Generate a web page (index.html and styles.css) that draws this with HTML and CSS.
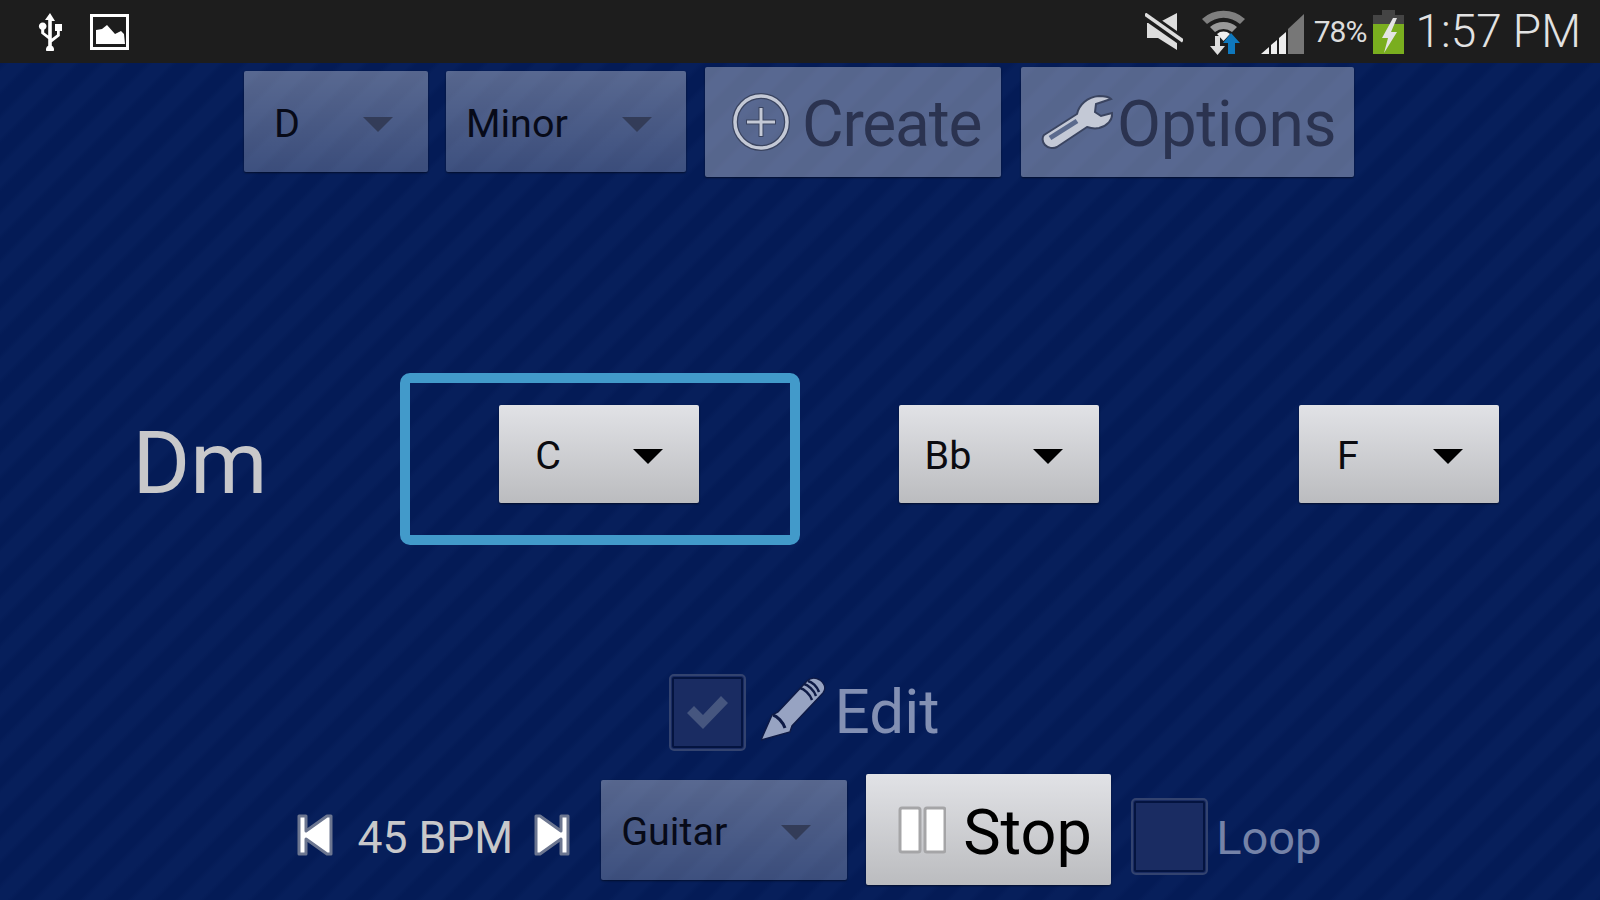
FILE: index.html

```html
<!DOCTYPE html>
<html lang="en">
<head>
  <meta charset="UTF-8">
  <title>Chord Progressions</title>
  <link rel="stylesheet" href="styles.css">
</head>
<body>
  <div class="status-bar">
    <svg class="ic-usb" width="24" height="38" viewBox="0 0 24 38">
      <path d="M12 0l5 8h-3.200v17.500l5.200-4v-3.500h-2v-7h7v7h-2.200v5l-8 6.200v3.600a4 4 0 1 1-3.600 0v-6.800l-7-5.400v-3.800a3.800 3.800 0 1 1 3 0v2.600l4 3.100v-15.500h-3.200z" fill="#fff"/>
    </svg>
    <svg class="ic-pic" width="39" height="36" viewBox="0 0 39 36">
      <rect x="1.500" y="1.500" width="36" height="33" fill="none" stroke="#fff" stroke-width="3"/>
      <path d="M6 30v-14l6-1 5-4 8 9 6-3 3 3 1 10z" fill="#fff"/>
    </svg>
    <div class="status-right">
      <svg class="ic-mute" width="38" height="38" viewBox="0 0 38 38">
        <path d="M2 10h11l19-10v37l-19-12h-11z" fill="#ddd"/>
        <path d="M-1 1l40 28" stroke="#1d1d1d" stroke-width="10"/>
        <path d="M0 1l38 27" stroke="#ddd" stroke-width="3.500"/>
      </svg>
      <svg class="ic-wifi" width="43" height="46" viewBox="0 0 43 46">
        <path d="M0 10a32 32 0 0 1 43 0l-5 5a25 25 0 0 0-33 0z" fill="#7f7f7f"/>
        <path d="M8 18a21 21 0 0 1 27 0l-5 5a14 14 0 0 0-17 0z" fill="#9a9a9a"/>
        <path d="M15 25a10 10 0 0 1 13 0l-6.500 7z" fill="#eee"/>
        <path d="M13 27h5v10h5l-7.500 9-7.500-9h5z" fill="#ddd"/>
        <path d="M29 24l9 10h-5v11h-7v-11h-5z" fill="#0f78bd"/>
      </svg>
      <svg class="ic-signal" width="43" height="40" viewBox="0 0 43 40">
        <path d="M0 40l8-7v7z" fill="#eee"/>
        <path d="M10 31l6-5v14h-6z" fill="#eee"/>
        <path d="M18 24l7-6v22h-7z" fill="#eee"/>
        <path d="M27 15l16-15v40h-16z" fill="#777"/>
      </svg>
      <span class="batt-pct">78%</span>
      <svg class="ic-batt" width="31" height="44" viewBox="0 0 31 44">
        <rect x="9" y="0" width="13" height="5" fill="#444"/>
        <rect x="0" y="5" width="31" height="10" fill="#444"/>
        <rect x="0" y="14" width="31" height="30" fill="#7aae1f"/>
        <path d="M20 8l-11 20h6l-4 15 13-21h-6l6-14z" fill="#e4e4e4"/>
      </svg>
      <span class="clock">1:57 PM</span>
    </div>
  </div>

  <div class="top-row">
    <div class="spinner off key-spin"><span>D</span><i class="arrow"></i></div>
    <div class="spinner off scale-spin"><span>Minor</span><i class="arrow"></i></div>
    <div class="btn off create-btn">
      <svg width="58" height="58" viewBox="0 0 58 58">
        <circle cx="29" cy="29" r="26" fill="none" stroke="#3a4460" stroke-width="6"/>
        <circle cx="29" cy="29" r="26" fill="none" stroke="#c4c9d6" stroke-width="3.500"/>
        <path d="M29 14v30M14 29h30" stroke="#3a4460" stroke-width="5"/>
        <path d="M29 15v28M15 29h28" stroke="#c4c9d6" stroke-width="3"/>
      </svg>
      <span>Create</span>
    </div>
    <div class="btn off options-btn">
      <svg width="72" height="54" viewBox="0 0 72 54">
        <path d="M3 40l33-21c2-9 10-17 22-18 5 0 10 1 12 3l-15 5-1 8 6 4 11-3c1 7-5 13-13 15-5 1-9 0-12-1l-30 20c-4 2-9 1-12-2s-3-8-1-10z" fill="#c4c9d6" stroke="#3a4460" stroke-width="2"/>
        <path d="M9 43l27-17" stroke="#5b6a8d" stroke-width="5"/>
      </svg>
      <span>Options</span>
    </div>
  </div>

  <div class="chord-row">
    <div class="chord-cell chord-name">Dm</div>
    <div class="chord-cell active">
      <div class="spinner small"><span>C</span><i class="arrow"></i></div>
    </div>
    <div class="chord-cell">
      <div class="spinner small"><span>Bb</span><i class="arrow"></i></div>
    </div>
    <div class="chord-cell">
      <div class="spinner small"><span>F</span><i class="arrow"></i></div>
    </div>
  </div>

  <div class="edit-row">
    <div class="check on">
      <svg width="46" height="36" viewBox="0 0 46 36">
        <path d="M3 19l7-7 9 9 18-19 7 7-25 26z" fill="#46567f"/>
      </svg>
    </div>
    <svg class="ic-pencil" width="65" height="65" viewBox="0 0 65 65">
      <path d="M0 64l11-25 6-3 29-31c3-3 8-4 13-1 5 4 6 9 3 13l-31 33-2 6z" fill="#97a3c2" stroke="#0e1a45" stroke-width="1.500"/>
      <path d="M12 39c4 1 10 7 12 13" fill="none" stroke="#0e1a45" stroke-width="3"/>
      <path d="M39 12c4 1 10 6 12 12M43 8c4 1 10 6 12 12M47 5c4 1 9 5 11 11" fill="none" stroke="#0e1a45" stroke-width="2.500"/>
    </svg>
    <span class="edit-label">Edit</span>
  </div>

  <div class="bottom-row">
    <svg class="ic-skip" width="38" height="44" viewBox="0 0 38 44">
      <path d="M3 3h7v15l21-15h4v38h-4l-21-15v15h-7z" fill="#fff" stroke="#6c7690" stroke-width="3" stroke-linejoin="round"/>
    </svg>
    <span class="bpm">45 BPM</span>
    <svg class="ic-skip next" width="38" height="44" viewBox="0 0 38 44">
      <path d="M3 3h7v15l21-15h4v38h-4l-21-15v15h-7z" fill="#fff" stroke="#6c7690" stroke-width="3" stroke-linejoin="round" transform="matrix(-1 0 0 1 38 0)"/>
    </svg>
    <div class="spinner off inst-spin"><span>Guitar</span><i class="arrow"></i></div>
    <div class="btn stop-btn">
      <svg width="48" height="48" viewBox="0 0 48 48">
        <rect x="2" y="2" width="20" height="44" rx="2" fill="#fff" stroke="#a5a5a7" stroke-width="3"/>
        <rect x="27" y="2" width="20" height="44" rx="2" fill="#fff" stroke="#a5a5a7" stroke-width="3"/>
      </svg>
      <span>Stop</span>
    </div>
    <div class="check"></div>
    <span class="loop-label">Loop</span>
  </div>
</body>
</html>
```

FILE: styles.css

```css
html, body {
  margin: 0;
  height: 100%;
}
body {
  width: 1600px;
  height: 900px;
  overflow: hidden;
  font-family: Roboto, "Liberation Sans", sans-serif;
  background-color: #041b56;
  background-image: repeating-linear-gradient(135deg, #041b56 0, #041b56 12px, #071f5b 17px, #071f5b 29px, #041b56 34px);
}

/* status bar */
.status-bar {
  height: 63px;
  background-color: #1d1d1d;
  display: flex;
  align-items: center;
  padding: 0 19px 0 38px;
  box-sizing: border-box;
}
.ic-pic {
  margin-left: 28px;
}
.status-right {
  margin-left: auto;
  display: flex;
  align-items: center;
}
.ic-wifi {
  margin-left: 19px;
}
.ic-signal {
  margin-left: 16px;
  margin-top: 4px;
}
.batt-pct {
  margin-left: 10px;
  font-size: 30px;
  color: #dcdcdc;
  letter-spacing: -1px;
}
.ic-batt {
  margin-left: 7px;
}
.clock {
  margin-left: 11px;
  margin-bottom: 2px;
  font-size: 46px;
  font-weight: 300;
  color: #e2e2e2;
}

/* spinners and buttons */
.spinner {
  display: flex;
  align-items: center;
  justify-content: space-between;
  box-sizing: border-box;
  border-radius: 2px;
  background: linear-gradient(#e1e2e6, #bbbcbf);
  box-shadow: 0 1px 2px rgba(0,0,0,0.5);
  color: #0b0b10;
  font-size: 39.500px;
}
.spinner span {
  padding-top: 3px;
}
.spinner.off {
  background: linear-gradient(rgba(255,255,255,0.33), rgba(255,255,255,0.22));
  color: #070a18;
}
.arrow {
  width: 0;
  height: 0;
  margin-top: 6px;
  border-left: 15px solid transparent;
  border-right: 15px solid transparent;
  border-top: 15px solid #000;
}
.off .arrow {
  border-top-color: #333c58;
}
.btn {
  display: flex;
  align-items: center;
  box-sizing: border-box;
  border-radius: 2px;
  box-shadow: 0 1px 2px rgba(0,0,0,0.5);
}
.btn span {
  padding-top: 6px;
}
.btn.off {
  background-color: rgba(255,255,255,0.33);
  color: #2b3350;
}

.top-row {
  display: flex;
  justify-content: center;
  align-items: center;
  height: 114px;
  padding: 3px 2px 0 0;
  box-sizing: border-box;
}
.key-spin {
  width: 184px;
  height: 101px;
  padding: 0 35px 0 30px;
}
.scale-spin {
  width: 240px;
  height: 101px;
  margin-left: 18px;
  padding: 0 34px 0 20px;
}
.create-btn {
  width: 296px;
  height: 110px;
  margin-left: 19px;
  padding-left: 27px;
  gap: 12px;
  font-size: 64px;
  letter-spacing: -1.200px;
}
.options-btn {
  width: 333px;
  height: 110px;
  margin-left: 20px;
  padding-left: 20px;
  gap: 4px;
  font-size: 64px;
  letter-spacing: -0.300px;
}

/* chord grid */
.chord-row {
  display: grid;
  grid-template-columns: repeat(4, 400px);
  height: 172px;
  margin-top: 196px;
}
.chord-cell {
  display: flex;
  align-items: center;
  justify-content: center;
  box-sizing: border-box;
  padding: 0 2px 11px 0;
}
.chord-cell.active {
  border: 10px solid #429aca;
  border-radius: 10px;
}
.chord-name {
  font-size: 88px;
  color: #c8c8ca;
  padding: 6px 0 0;
}
.spinner.small {
  width: 200px;
  height: 98px;
  padding-right: 36px;
}
.small span {
  width: 98px;
  text-align: center;
}

.edit-row {
  display: flex;
  justify-content: center;
  align-items: center;
  height: 80px;
  margin-top: 127px;
  padding-left: 8px;
}
.check {
  width: 77px;
  height: 77px;
  box-sizing: border-box;
  display: flex;
  align-items: center;
  justify-content: center;
  border: 2px solid #33436f;
  outline: 2px solid #041440;
  outline-offset: -5px;
  border-radius: 5px;
  background-color: #1a2c62;
}
.ic-pencil {
  margin-left: 15px;
  margin-bottom: 7px;
}
.edit-label {
  margin-left: 9px;
  margin-bottom: 1px;
  font-size: 62px;
  color: #8390b3;
}

.bottom-row {
  display: flex;
  justify-content: center;
  align-items: center;
  height: 111px;
  margin-top: 22px;
  padding-left: 18px;
}
.ic-skip {
  margin-top: 10px;
}
.bpm {
  margin-left: 23px;
  margin-top: 16px;
  font-size: 44.500px;
  color: #c8c8ca;
}
.ic-skip.next {
  margin-left: 20px;
}
.inst-spin {
  width: 246px;
  height: 100px;
  margin-left: 30px;
  padding: 0 36px 0 20px;
}
.inst-spin span {
  padding-top: 4px;
}
.stop-btn {
  width: 245px;
  height: 111px;
  margin-left: 19px;
  padding-left: 32px;
  gap: 17px;
  font-size: 63px;
  color: #000;
  background: linear-gradient(#e1e2e6, #bbbcbf);
}
.bottom-row .check {
  margin-left: 20px;
  margin-top: 13px;
}
.loop-label {
  margin-left: 8px;
  margin-top: 16px;
  font-size: 47px;
  color: #7583a8;
}
```
